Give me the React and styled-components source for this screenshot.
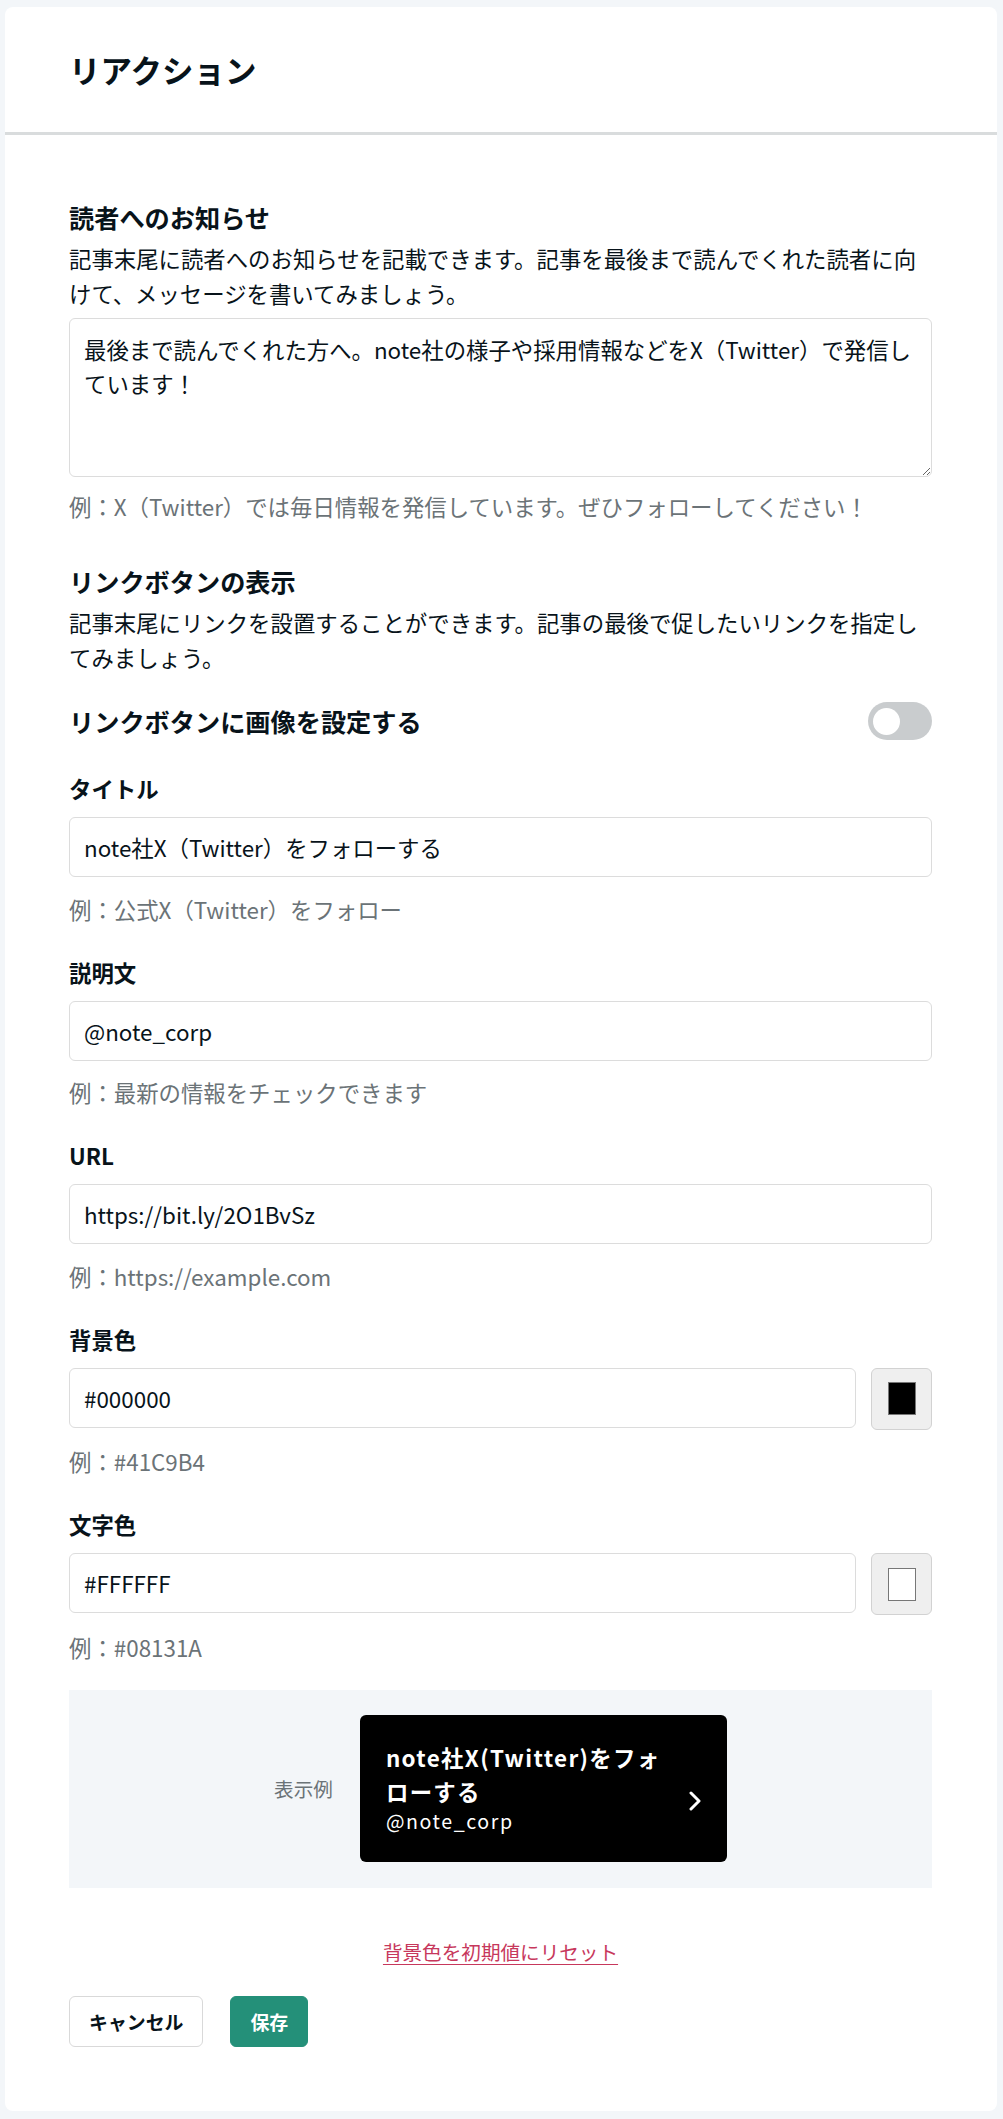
import React from "react";
import styled, { createGlobalStyle } from "styled-components";

const GlobalStyle = createGlobalStyle`
    html, body {
        margin: 0;
        padding: 0;
        background: #f3f6f9;
    }
    body {
        font-family: "Noto Sans CJK JP", "Noto Sans", sans-serif;
        color: #08131a;
    }
    * { box-sizing: border-box; }
`;

const Page = styled.div`
        padding: 7px 6px 11px 5px;`,
    Card = styled.div`
        background: white;
        border-radius: 8px;`,
    Header = styled.header`
        height: 128px;
        display: flex;
        align-items: center;
        padding: 0 64px;
        border-bottom: 3px solid #d9dcdd;`,
    Title = styled.h1`
        margin: 0;
        font-size: 31.5px;
        font-weight: 700;
        line-height: 1.3;`,
    Body = styled.div`
        padding: 64px 65px 64px 64px;
        display: flex;
        flex-direction: column;`;

const SectionTitle = styled.h2`
        margin: ${p => p.$top || 0}px 0 0;
        font-size: 25.2px;
        font-weight: 700;
        line-height: 36px;`,
    Description = styled.p`
        margin: 6px 0 0;
        font-size: 22.4px;
        line-height: 35px;`,
    Hint = styled.p`
        margin: ${p => p.$top || 15.5}px 0 0;
        font-size: 22.4px;
        line-height: 32px;
        color: #6b7377;`,
    Label = styled.label`
        display: block;
        margin-top: ${p => p.$top || 31}px;
        font-size: 22.4px;
        font-weight: 700;
        line-height: 32px;`;

const TextArea = styled.textarea`
        display: block;
        width: 100%;
        height: 159px;
        margin-top: 7px;
        padding: 13px 14px;
        border: 1px solid #dcdcdc;
        border-radius: 6px;
        font: inherit;
        font-size: 22.4px;
        line-height: 34px;
        color: #08131a;
        resize: vertical;
        outline: none;`,
    InputRow = styled.div`
        display: flex;
        gap: 15px;
        margin-top: 13px;`,
    TextInput = styled.input`
        flex: 1;
        min-width: 0;
        height: 60px;
        padding: 0 14px;
        border: 1px solid #dcdcdc;
        border-radius: 6px;
        font: inherit;
        font-size: 22.4px;
        color: #08131a;
        outline: none;`,
    SwatchButton = styled.button`
        width: 61px;
        height: 62px;
        flex: none;
        display: flex;
        align-items: center;
        justify-content: center;
        background: #efefef;
        border: 1px solid #d2d2d2;
        border-radius: 6px;
        padding: 0;`,
    Swatch = styled.span`
        width: 28px;
        height: 33px;
        background: ${p => p.$color};
        border: 1.5px solid #777;`;

const ToggleRow = styled.div`
        display: flex;
        align-items: center;
        justify-content: space-between;
        margin-top: 27px;
        height: 38px;`,
    ToggleLabel = styled.span`
        font-size: 25.2px;
        font-weight: 700;
        line-height: 36px;`,
    Toggle = styled.span`
        width: 64px;
        height: 38px;
        border-radius: 19px;
        background: #c9ccce;
        position: relative;
        &::after {
            content: "";
            position: absolute;
            left: 5px;
            top: 5.5px;
            width: 27px;
            height: 27px;
            border-radius: 50%;
            background: white;
        }`;

const Preview = styled.div`
        margin-top: 27px;
        height: 198px;
        background: #f3f6f9;
        display: flex;
        align-items: center;
        justify-content: center;
        gap: 27px;`,
    PreviewLabel = styled.span`
        font-size: 19.6px;
        color: #6b7377;`,
    LinkCard = styled.div`
        width: 367px;
        height: 147px;
        background: #000;
        border-radius: 6px;
        padding: 25px 25px 0 26px;
        display: flex;
        align-items: center;
        gap: 16px;
        color: white;`,
    LinkText = styled.div`
        flex: 1;
        align-self: flex-start;`,
    LinkTitle = styled.div`
        font-size: 22.4px;
        font-weight: 700;
        line-height: 34px;
        letter-spacing: 0.06em;`,
    LinkSub = styled.div`
        margin-top: -2px;
        font-size: 19.6px;
        line-height: 30px;
        letter-spacing: 0.08em;`;

const ResetLink = styled.a`
        align-self: center;
        margin-top: 50px;
        font-size: 19.6px;
        line-height: 28px;
        color: #c7385c;
        text-decoration: underline;
        text-underline-offset: 4px;
        cursor: pointer;`,
    Actions = styled.div`
        display: flex;
        gap: 27px;
        margin-top: 30px;`,
    Button = styled.button`
        height: 51px;
        padding: 0 19px;
        border-radius: 6px;
        font: inherit;
        font-size: 18.9px;
        font-weight: 700;
        border: 1px solid ${p => p.$primary ? "#249079" : "#d9d9d9"};
        background: ${p => p.$primary ? "#249079" : "white"};
        color: ${p => p.$primary ? "white" : "#08131a"};`;

function Chevron() {
    return <svg width="14" height="20" viewBox="0 0 14 20" fill="none">
        <path d="M3 2l8 8-8 8" stroke="white" strokeWidth="3" strokeLinecap="round" strokeLinejoin="round"/>
    </svg>;
}

function Field({ label, value, hint, color }) {
    return <>
        <Label>{label}</Label>
        <InputRow>
            <TextInput value={value} readOnly/>
            {color && <SwatchButton><Swatch $color={color}/></SwatchButton>}
        </InputRow>
        <Hint>{hint}</Hint>
    </>;
}

export default function App() {
    return <Page>
        <GlobalStyle/>
        <Card>
            <Header>
                <Title>リアクション</Title>
            </Header>
            <Body>
                <SectionTitle>読者へのお知らせ</SectionTitle>
                <Description>記事末尾に読者へのお知らせを記載できます。記事を最後まで読んでくれた読者に向けて、メッセージを書いてみましょう。</Description>
                <TextArea value="最後まで読んでくれた方へ。note社の様子や採用情報などをX（Twitter）で発信しています！" readOnly/>
                <Hint $top={13}>例：X（Twitter）では毎日情報を発信しています。ぜひフォローしてください！</Hint>

                <SectionTitle $top={41}>リンクボタンの表示</SectionTitle>
                <Description>記事末尾にリンクを設置することができます。記事の最後で促したいリンクを指定してみましょう。</Description>
                <ToggleRow>
                    <ToggleLabel>リンクボタンに画像を設定する</ToggleLabel>
                    <Toggle/>
                </ToggleRow>

                <Label $top={32}>タイトル</Label>
                <InputRow>
                    <TextInput value="note社X（Twitter）をフォローする" readOnly/>
                </InputRow>
                <Hint>例：公式X（Twitter）をフォロー</Hint>
                <Field label="説明文" value="@note_corp" hint="例：最新の情報をチェックできます"/>
                <Field label="URL" value="https://bit.ly/2O1BvSz" hint="例：https://example.com"/>
                <Field label="背景色" value="#000000" hint="例：#41C9B4" color="#000"/>
                <Field label="文字色" value="#FFFFFF" hint="例：#08131A" color="#fff"/>

                <Preview>
                    <PreviewLabel>表示例</PreviewLabel>
                    <LinkCard>
                        <LinkText>
                            <LinkTitle>note社X(Twitter)をフォローする</LinkTitle>
                            <LinkSub>@note_corp</LinkSub>
                        </LinkText>
                        <Chevron/>
                    </LinkCard>
                </Preview>

                <ResetLink>背景色を初期値にリセット</ResetLink>
                <Actions>
                    <Button>キャンセル</Button>
                    <Button $primary>保存</Button>
                </Actions>
            </Body>
        </Card>
    </Page>;
}
